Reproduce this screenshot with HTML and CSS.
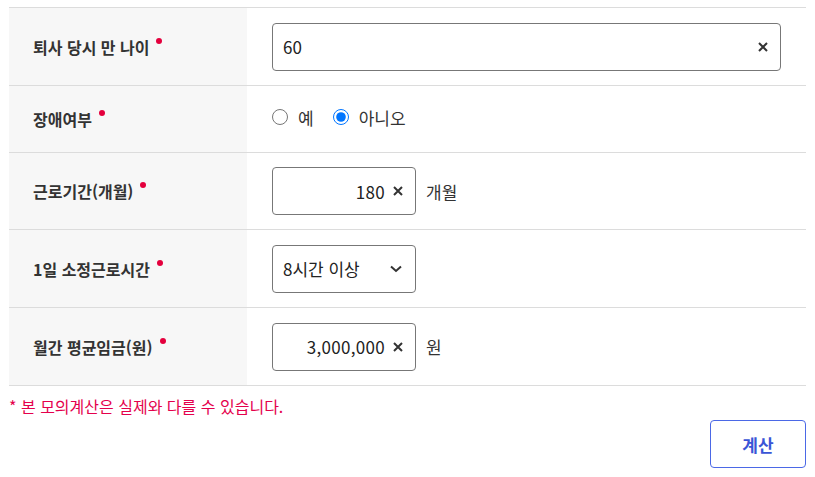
FILE: index.html
```html
<!DOCTYPE html>
<html lang="ko">
<head>
<meta charset="utf-8">
<link rel="stylesheet" href="styles.css">
</head>
<body>
<div class="page">
  <div class="form">
    <div class="row">
      <div class="label">퇴사 당시 만 나이<span class="req"></span></div>
      <div class="field">
        <div class="input wide">
          <span class="val left">60</span>
          <svg class="clear" viewBox="0 0 10 10"><path d="M1 1L9 9M9 1L1 9"/></svg>
        </div>
      </div>
    </div>
    <div class="row short">
      <div class="label">장애여부<span class="req"></span></div>
      <div class="field radios">
        <label class="radio"><input type="radio" name="d"><span>예</span></label>
        <label class="radio"><input type="radio" name="d" checked><span>아니오</span></label>
      </div>
    </div>
    <div class="row mid">
      <div class="label">근로기간(개월)<span class="req"></span></div>
      <div class="field">
        <div class="input small">
          <span class="val">180</span>
          <svg class="clear" viewBox="0 0 10 10"><path d="M1 1L9 9M9 1L1 9"/></svg>
        </div>
        <span class="unit">개월</span>
      </div>
    </div>
    <div class="row">
      <div class="label">1일 소정근로시간<span class="req"></span></div>
      <div class="field">
        <div class="input small select">
          <span class="val left">8시간 이상</span>
          <svg class="chev" viewBox="0 0 12 8"><path d="M1 1.5L6 6L11 1.5"/></svg>
        </div>
      </div>
    </div>
    <div class="row">
      <div class="label">월간 평균임금(원)<span class="req"></span></div>
      <div class="field">
        <div class="input small">
          <span class="val">3,000,000</span>
          <svg class="clear" viewBox="0 0 10 10"><path d="M1 1L9 9M9 1L1 9"/></svg>
        </div>
        <span class="unit">원</span>
      </div>
    </div>
  </div>
  <p class="note">* 본 모의계산은 실제와 다를 수 있습니다.</p>
  <div class="actions">
    <button class="btn">계산</button>
  </div>
</div>
</body>
</html>
```
FILE: styles.css
```css
* { box-sizing: border-box; }
html, body { margin: 0; padding: 0; background: #fff; }
body {
  font-family: "Noto Sans CJK KR", "Noto Sans", sans-serif;
  color: #333;
}
.page { padding: 7px 9px 0 9px; }
.form { border-top: 1px solid #dcdcdc; }
.row {
  display: grid;
  grid-template-columns: 238px 1fr;
  border-bottom: 1px solid #dcdcdc;
  height: 78px;
}
.row.short { height: 67px; }
.row.mid { height: 77px; }
.label {
  background: #f7f7f7;
  display: flex;
  align-items: center;
  padding-left: 24px;
  font-size: 16px;
  font-weight: 700;
  color: #333;
}
.req {
  display: inline-block;
  width: 6px;
  height: 6px;
  border-radius: 50%;
  background: #e4003d;
  margin-left: 7px;
  margin-top: -12px;
}
.field {
  display: flex;
  align-items: center;
  padding: 0 25px;
  gap: 10px;
}
.field.radios { gap: 0; padding-bottom: 4px; }
.input {
  height: 48px;
  border: 1px solid #777;
  border-radius: 4px;
  display: flex;
  align-items: center;
  padding: 0 10px;
  gap: 8px;
  font-size: 17px;
  color: #222;
}
.input.wide { flex: 1; }
.input.small { width: 144px; }
.val { flex: 1; text-align: right; letter-spacing: 0.3px; }
.val.left { text-align: left; letter-spacing: 0; }
.clear { width: 10px; height: 10px; flex: none; margin-right: 2px; }
.clear path { stroke: #333; stroke-width: 2; fill: none; }
.chev { width: 12px; height: 8px; flex: none; margin-right: 3px; }
.chev path { stroke: #333; stroke-width: 2; fill: none; }
.unit { font-size: 17px; color: #333; }
.radio {
  display: flex;
  align-items: center;
  font-size: 17px;
  color: #333;
  margin-right: 19px;
}
.radio input {
  width: 16px;
  height: 16px;
  margin: 0 10px 0 0;
}
.note {
  margin: 10px 0 0 0;
  font-size: 16px;
  color: #e4004c;
  line-height: 20px;
}
.actions {
  display: flex;
  justify-content: flex-end;
  margin-top: 4px;
}
.btn {
  width: 96px;
  height: 48px;
  background: #fff;
  border: 1px solid #4b68e6;
  border-radius: 4px;
  color: #3a55d6;
  font-family: inherit;
  font-size: 17px;
  font-weight: 700;
  margin-right: 0;
}
```
